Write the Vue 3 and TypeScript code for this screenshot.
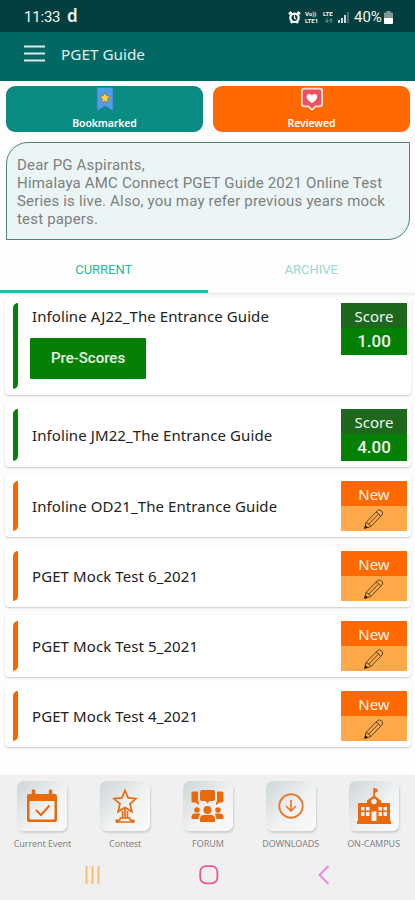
<script setup lang="ts">
interface TestItem {
  title: string
  score?: string
  preScores?: boolean
}

const tests: TestItem[] = [
  { title: 'Infoline AJ22_The Entrance Guide', score: '1.00', preScores: true },
  { title: 'Infoline JM22_The Entrance Guide', score: '4.00' },
  { title: 'Infoline OD21_The Entrance Guide' },
  { title: 'PGET Mock Test 6_2021' },
  { title: 'PGET Mock Test 5_2021' },
  { title: 'PGET Mock Test 4_2021' },
]

const navItems: { id: string; label: string }[] = [
  { id: 'event', label: 'Current Event' },
  { id: 'contest', label: 'Contest' },
  { id: 'forum', label: 'FORUM' },
  { id: 'downloads', label: 'DOWNLOADS' },
  { id: 'campus', label: 'ON-CAMPUS' },
]
</script>

<template>
  <div class="screen">
    <header class="status">
      <span class="time">11:33</span>
      <span class="carrier">d</span>
      <div class="status-right">
        <svg class="alarm" width="13" height="13" viewBox="0 0 13 13">
          <path d="M1 3.2 3.6 1M12 3.2 9.4 1M3 12l1-1.3M10 12 9 10.7" stroke="#fff" stroke-width="2.400" />
          <circle cx="6.5" cy="6.8" r="4.2" fill="#0a3f3d" stroke="#fff" stroke-width="2.200" />
          <path d="M6.5 4.3v2.8l1.7.8" fill="none" stroke="#fff" stroke-width="1.1" />
        </svg>
        <span class="volte"><span>Vo))</span><span>LTE1</span></span>
        <span class="lte">
          <span>LTE</span>
          <svg width="8" height="5" viewBox="0 0 8 5">
            <path d="M2 0v4M.5 2.500 2 4.300l1.500-1.800M6 5V1M4.500 2.500 6 .7l1.500 1.800" fill="none" stroke="#7f9d9b" stroke-width=".9" />
          </svg>
        </span>
        <svg class="signal" width="12" height="12" viewBox="0 0 12 12">
          <path d="M0 9h2v3H0zM3 7h2v5H3zM6 4h2v8H6z" fill="#d0dddc" />
          <path d="M9 1h2v11H9z" fill="#4c706e" />
        </svg>
        <span class="percent">40%</span>
        <svg class="battery" width="9" height="13" viewBox="0 0 9 13">
          <path d="M2.5 0h4v1.5H8q1 0 1 1V7H0V2.500q0-1 1-1h1.500z" fill="#7e9998" />
          <path d="M0 7h9v5q0 1-1 1H1q-1 0-1-1z" fill="#fff" />
        </svg>
      </div>
    </header>

    <div class="appbar">
      <svg width="21" height="17" viewBox="0 0 21 17">
        <path d="M0 1.500h21M0 8.500h21M0 15.500h21" stroke="#dcebe9" stroke-width="2" />
      </svg>
      <h1>PGET Guide</h1>
    </div>

    <div class="actions">
      <button class="action teal">
        <svg width="18" height="25" viewBox="0 0 18 25">
          <path d="M1 .5h16v23.500l-8-5-8 5z" fill="#4da0e8" stroke="#3677b4" stroke-width=".7" />
          <path d="m9 5.500 1.700 3.200 3.500.7-2.500 2.600.5 3.600L9 14.100l-3.200 1.500.5-3.600-2.500-2.600 3.500-.7z" fill="#ffce4a" stroke="#856d42" stroke-width=".7" />
        </svg>
        <span>Bookmarked</span>
      </button>
      <button class="action orange">
        <svg width="24" height="25" viewBox="0 0 24 25">
          <path d="M4 .8h16q3 0 3 3v13.500q0 3-3 3h-4L12 24l-4-3.700H4q-3 0-3-3V3.800q0-3 3-3z" fill="#ffdfd7" />
          <path d="M5 2.500h14q2.300 0 2.300 2.300v11.400q0 2.300-2.300 2.300h-3.800L12 21.500l-3.200-3H5q-2.300 0-2.300-2.300V4.800Q2.700 2.500 5 2.500z" fill="#e95362" />
          <path d="M12 16.200C4.500 11.700 6.300 6.500 9.600 7c1.300.1 2.100 1 2.400 1.800.3-.8 1.100-1.700 2.400-1.800 3.300-.5 5.100 4.700-2.400 9.200z" fill="#fff" />
        </svg>
        <span>Reviewed</span>
      </button>
    </div>

    <section class="notice">
      <p>Dear PG Aspirants,</p>
      <p>Himalaya AMC Connect PGET Guide 2021 Online Test</p>
      <p>Series is live. Also, you may refer previous years mock</p>
      <p>test papers.</p>
    </section>

    <nav class="tabs">
      <span class="tab active">CURRENT</span>
      <span class="tab">ARCHIVE</span>
    </nav>

    <main class="list">
      <article
        v-for="t in tests"
        :key="t.title"
        class="card"
        :class="{ tall: t.preScores, scored: t.score }"
      >
        <i class="stripe"></i>
        <div class="body">
          <h2>{{ t.title }}</h2>
          <button v-if="t.preScores" class="pre">Pre-Scores</button>
        </div>
        <div class="badge">
          <span class="badge-head">{{ t.score ? 'Score' : 'New' }}</span>
          <span class="badge-foot">
            <template v-if="t.score">{{ t.score }}</template>
            <svg v-else width="22" height="22" viewBox="0 0 22 22">
              <path d="m1.500 20.500 1.500-6L14.500 2.600q1.700-1.500 4 .3 2.100 2 .6 4L7.800 18.500zM3 14.500q3 .6 4.800 4M13 4.200q3 .6 4.500 4.300M5.500 16.300 15.200 6.300" fill="none" stroke="#5a421e" stroke-width="1" />
              <path d="m1.500 20.500.9-3.600 2.700 2.500z" fill="#251c10" />
            </svg>
          </span>
        </div>
      </article>
    </main>

    <footer class="bottom">
      <div class="nav">
        <div v-for="n in navItems" :key="n.id" class="nav-item">
          <div class="tile">
            <svg v-if="n.id === 'event'" width="32" height="34" viewBox="0 0 32 34">
              <path d="M3 5h26q2 0 2 2v24q0 2-2 2H3q-2 0-2-2V7q0-2 2-2zm.5 7v17.500q0 1 1 1h23q1 0 1-1V12z" fill="#e96a0c" fill-rule="evenodd" />
              <path d="M7.500 2v5M24.500 2v5" stroke="#e96a0c" stroke-width="3.500" stroke-linecap="round" />
              <path d="m10 21 5 5 8.500-9.500" fill="none" stroke="#e96a0c" stroke-width="2" />
            </svg>
            <svg v-else-if="n.id === 'contest'" width="26" height="36" viewBox="0 0 26 36">
              <g fill="none" stroke="#e96a0c" stroke-width="1.700">
                <path d="m13 2.500 3.100 7.400 8 .7-6.100 5.200 1.900 7.800L13 19.400l-6.900 4.200L8 15.800l-6.100-5.200 8-.7z" />
                <path d="M10.500 23v7M13 19.500V30M15.500 23v7M9 30l-3 3.500M17 30l3 3.500M7.500 30h11M4 34h18" />
              </g>
              <circle cx="5" cy="33" r="1.700" fill="#e96a0c" /><circle cx="21" cy="33" r="1.700" fill="#e96a0c" />
            </svg>
            <svg v-else-if="n.id === 'forum'" width="33" height="34" viewBox="0 0 33 34">
              <g fill="#e96a0c">
                <path d="M11 1h11q2 0 2 2v7q0 2-2 2h-3.500l-2 2.500-2-2.500H11q-2 0-2-2V3q0-2 2-2zM2 2.500h5V11q0 2 1 2.500V16l-3.500-2.500H2q-1.500 0-1.500-1.500V4Q.5 2.500 2 2.500zM31 2.500h-5V11q0 2-1 2.500V16l3.500-2.500H31q1.500 0 1.500-1.500V4q0-1.500-1.500-1.500z" />
                <circle cx="16.500" cy="21" r="4" /><circle cx="6" cy="21" r="2.800" /><circle cx="27" cy="21" r="2.800" />
                <path d="M9 33v-3q0-4 4-4h7q4 0 4 4v3zM.5 30v-2q0-3.500 3.500-3.500h4q1 0 1.500.5-2 1.500-2 5zM32.500 30v-2q0-3.500-3.500-3.500h-4q-1 0-1.500.5 2 1.500 2 5z" />
              </g>
            </svg>
            <svg v-else-if="n.id === 'downloads'" width="26" height="26" viewBox="0 0 26 26">
              <circle cx="13" cy="13" r="11.700" fill="none" stroke="#e97a2a" stroke-width="1.900" />
              <path d="M13 7v11M8 13l5 5 5-5" fill="none" stroke="#e97a2a" stroke-width="1.700" />
            </svg>
            <svg v-else width="34" height="36" viewBox="0 0 34 36">
              <path d="M16.300 0h.9l3.300 1v3l-2.500.8V8l6 4.500V15h8q1 0 1 1v17h1v3H0v-3h1V16q0-1 1-1h8v-2.500L16.300 8z" fill="#e96a0c" />
              <circle cx="17" cy="13.500" r="2.700" fill="#eceff1" />
              <path d="M4 19h3.500v3.500H4zM9 19h3.500v3.500H9zM4 24h3.500v4H4zM9 24h3.500v4H9zM21.500 19H25v3.500h-3.500zM26.500 19H30v3.500h-3.500zM21.500 24H25v4h-3.500zM26.500 24H30v4h-3.500zM14.500 23.500h5V33h-5z" fill="#eef1f2" />
            </svg>
          </div>
          <span class="nav-label">{{ n.label }}</span>
        </div>
      </div>
      <div class="system">
        <svg width="15" height="18" viewBox="0 0 15 18">
          <path d="M1.500 0v18M7.500 0v18M13.500 0v18" stroke="#f9bd72" stroke-width="2" />
        </svg>
        <svg width="20" height="20" viewBox="0 0 20 20">
          <rect x="1.200" y="1.200" width="17.200" height="17.200" rx="5.800" fill="none" stroke="#ec5595" stroke-width="1.800" />
        </svg>
        <svg width="12" height="20" viewBox="0 0 12 20">
          <path d="M10.500 1 1.500 10l9 9" fill="none" stroke="#ee82ee" stroke-width="1.900" />
        </svg>
      </div>
    </footer>
  </div>
</template>

<style>
body {
  background: #fdfdfd;
}
</style>

<style scoped>
* {
  box-sizing: border-box;
}
.screen {
  width: 415px;
  height: 900px;
  display: flex;
  flex-direction: column;
  overflow: hidden;
  background: #fdfdfd;
  font-family: "Noto Sans", sans-serif;
  white-space: nowrap;
}
svg {
  display: block;
  flex: none;
}
h1, h2, p {
  margin: 0;
  font-weight: 400;
}
button {
  border: 0;
  padding: 0;
  margin: 0;
}
.status {
  height: 32px;
  flex: none;
  display: flex;
  align-items: center;
  padding: 2px 22px 0 24px;
  background: #033f3e;
  color: #f1f6f5;
  font-family: Roboto, sans-serif;
}
.time {
  font-size: 15px;
  letter-spacing: -0.2px;
  width: 43px;
}
.carrier {
  font: 600 17px/20px "Noto Sans", sans-serif;
  margin-top: -2px;
}
.status-right {
  margin-left: auto;
  display: flex;
  align-items: center;
}
.alarm {
  margin-right: 4px;
}
.volte, .lte {
  display: flex;
  flex-direction: column;
  font-size: 6px;
  font-weight: 700;
  line-height: 7px;
}
.volte {
  width: 18px;
}
.lte {
  width: 15px;
}
.lte svg {
  margin: 1px 0 1px 2px;
}
.signal {
  margin-right: 4px;
}
.percent {
  font-size: 15px;
  width: 30px;
}
.appbar {
  height: 49px;
  flex: none;
  display: flex;
  align-items: center;
  gap: 16px;
  padding: 0 24px 6px;
  background: #016864;
}
h1 {
  font-size: 15.300px;
  line-height: 22px;
  color: #e0eeec;
}
.actions {
  display: flex;
  gap: 10px;
  padding: 5px 5px 0 6px;
}
.action {
  flex: 1;
  height: 46px;
  border-radius: 9px;
  display: flex;
  flex-direction: column;
  align-items: center;
  padding-top: 1px;
  color: #fff;
  font: 600 10.500px/14px "Noto Sans", sans-serif;
  letter-spacing: -0.12px;
}
.action span {
  margin-top: 4px;
}
.teal {
  background: #0a8b83;
}
.orange {
  background: #ff6900;
}
.notice {
  height: 98px;
  flex: none;
  margin: 10px 5px 0 6px;
  padding: 13px 10px;
  border: 1px solid #4c837b;
  border-radius: 22px 0 22px 0;
  background: #ecf5f5;
  color: #7b8080;
  font: 15px/18px Roboto, sans-serif;
  letter-spacing: 0.180px;
}
.tabs {
  height: 53px;
  flex: none;
  display: flex;
  box-shadow: 0 2px 2px #e9e9e9;
  margin-bottom: 4px;
}
.tab {
  flex: 1;
  text-align: center;
  font: 13px/59px Roboto, sans-serif;
  color: #98d9cc;
}
.active {
  color: #26b99f;
  border-bottom: 3px solid #21bca5;
}
.list {
  display: flex;
  flex-direction: column;
  gap: 8px;
  padding: 0 4px 0 5px;
}
.card {
  height: 62px;
  display: flex;
  align-items: center;
  padding: 6px 4px 6px 8px;
  border-radius: 4px;
  background: #fff;
  box-shadow: 0 1px 2px #c6c9cb;
}
.card.scored {
  height: 64px;
}
.card.tall {
  height: 98px;
  align-items: flex-start;
}
.stripe {
  align-self: stretch;
  width: 5px;
  background: #fb6500;
  border-radius: 5px 0 5px 0;
}
.scored .stripe {
  background: #068006;
}
.body {
  flex: 1;
  padding-left: 14px;
}
.tall .body {
  padding-left: 12px;
}
h2 {
  font-size: 15px;
  line-height: 26px;
  letter-spacing: 0.090px;
  color: #222;
}
.tall h2 {
  padding-left: 2px;
}
.pre {
  display: block;
  width: 116px;
  height: 41px;
  margin-top: 9px;
  background: #048104;
  color: #e8f4e8;
  border-radius: 1px;
  font: 500 15px/41px Roboto, sans-serif;
}
.badge {
  width: 66px;
  height: 50px;
  display: flex;
  flex-direction: column;
  text-align: center;
  color: #fff3e9;
}
.badge-head {
  height: 25px;
  flex: none;
  background: #ff6900;
  font-size: 15px;
  line-height: 26px;
}
.badge-foot {
  flex: 1;
  display: flex;
  align-items: center;
  justify-content: center;
  background: #ffa94b;
}
.scored .badge {
  height: 52px;
  color: #f0f7f0;
}
.scored .badge-head {
  background: #1e681e;
}
.scored .badge-foot {
  background: #048004;
  font: 500 17px/27px Roboto, sans-serif;
}
.bottom {
  margin-top: auto;
  height: 125px;
  flex: none;
  background: #f0f0f0;
}
.nav {
  display: flex;
  padding: 6px 0 0 1px;
}
.nav-item {
  flex: 1;
  display: flex;
  flex-direction: column;
  align-items: center;
}
.tile {
  width: 50px;
  height: 50px;
  border-radius: 7px;
  display: flex;
  align-items: center;
  justify-content: center;
  background: linear-gradient(135deg, #ced5d8, #f0f2f3 55%, #fafafa);
  box-shadow: 1px 2px 2px #d0d0d0;
}
.nav-label {
  margin-top: 6px;
  font-size: 9px;
  line-height: 14px;
  letter-spacing: -0.050px;
  color: #858585;
}
.system {
  display: flex;
  align-items: center;
  justify-content: space-between;
  height: 20px;
  margin-top: 14px;
  padding: 0 85px;
}
</style>
